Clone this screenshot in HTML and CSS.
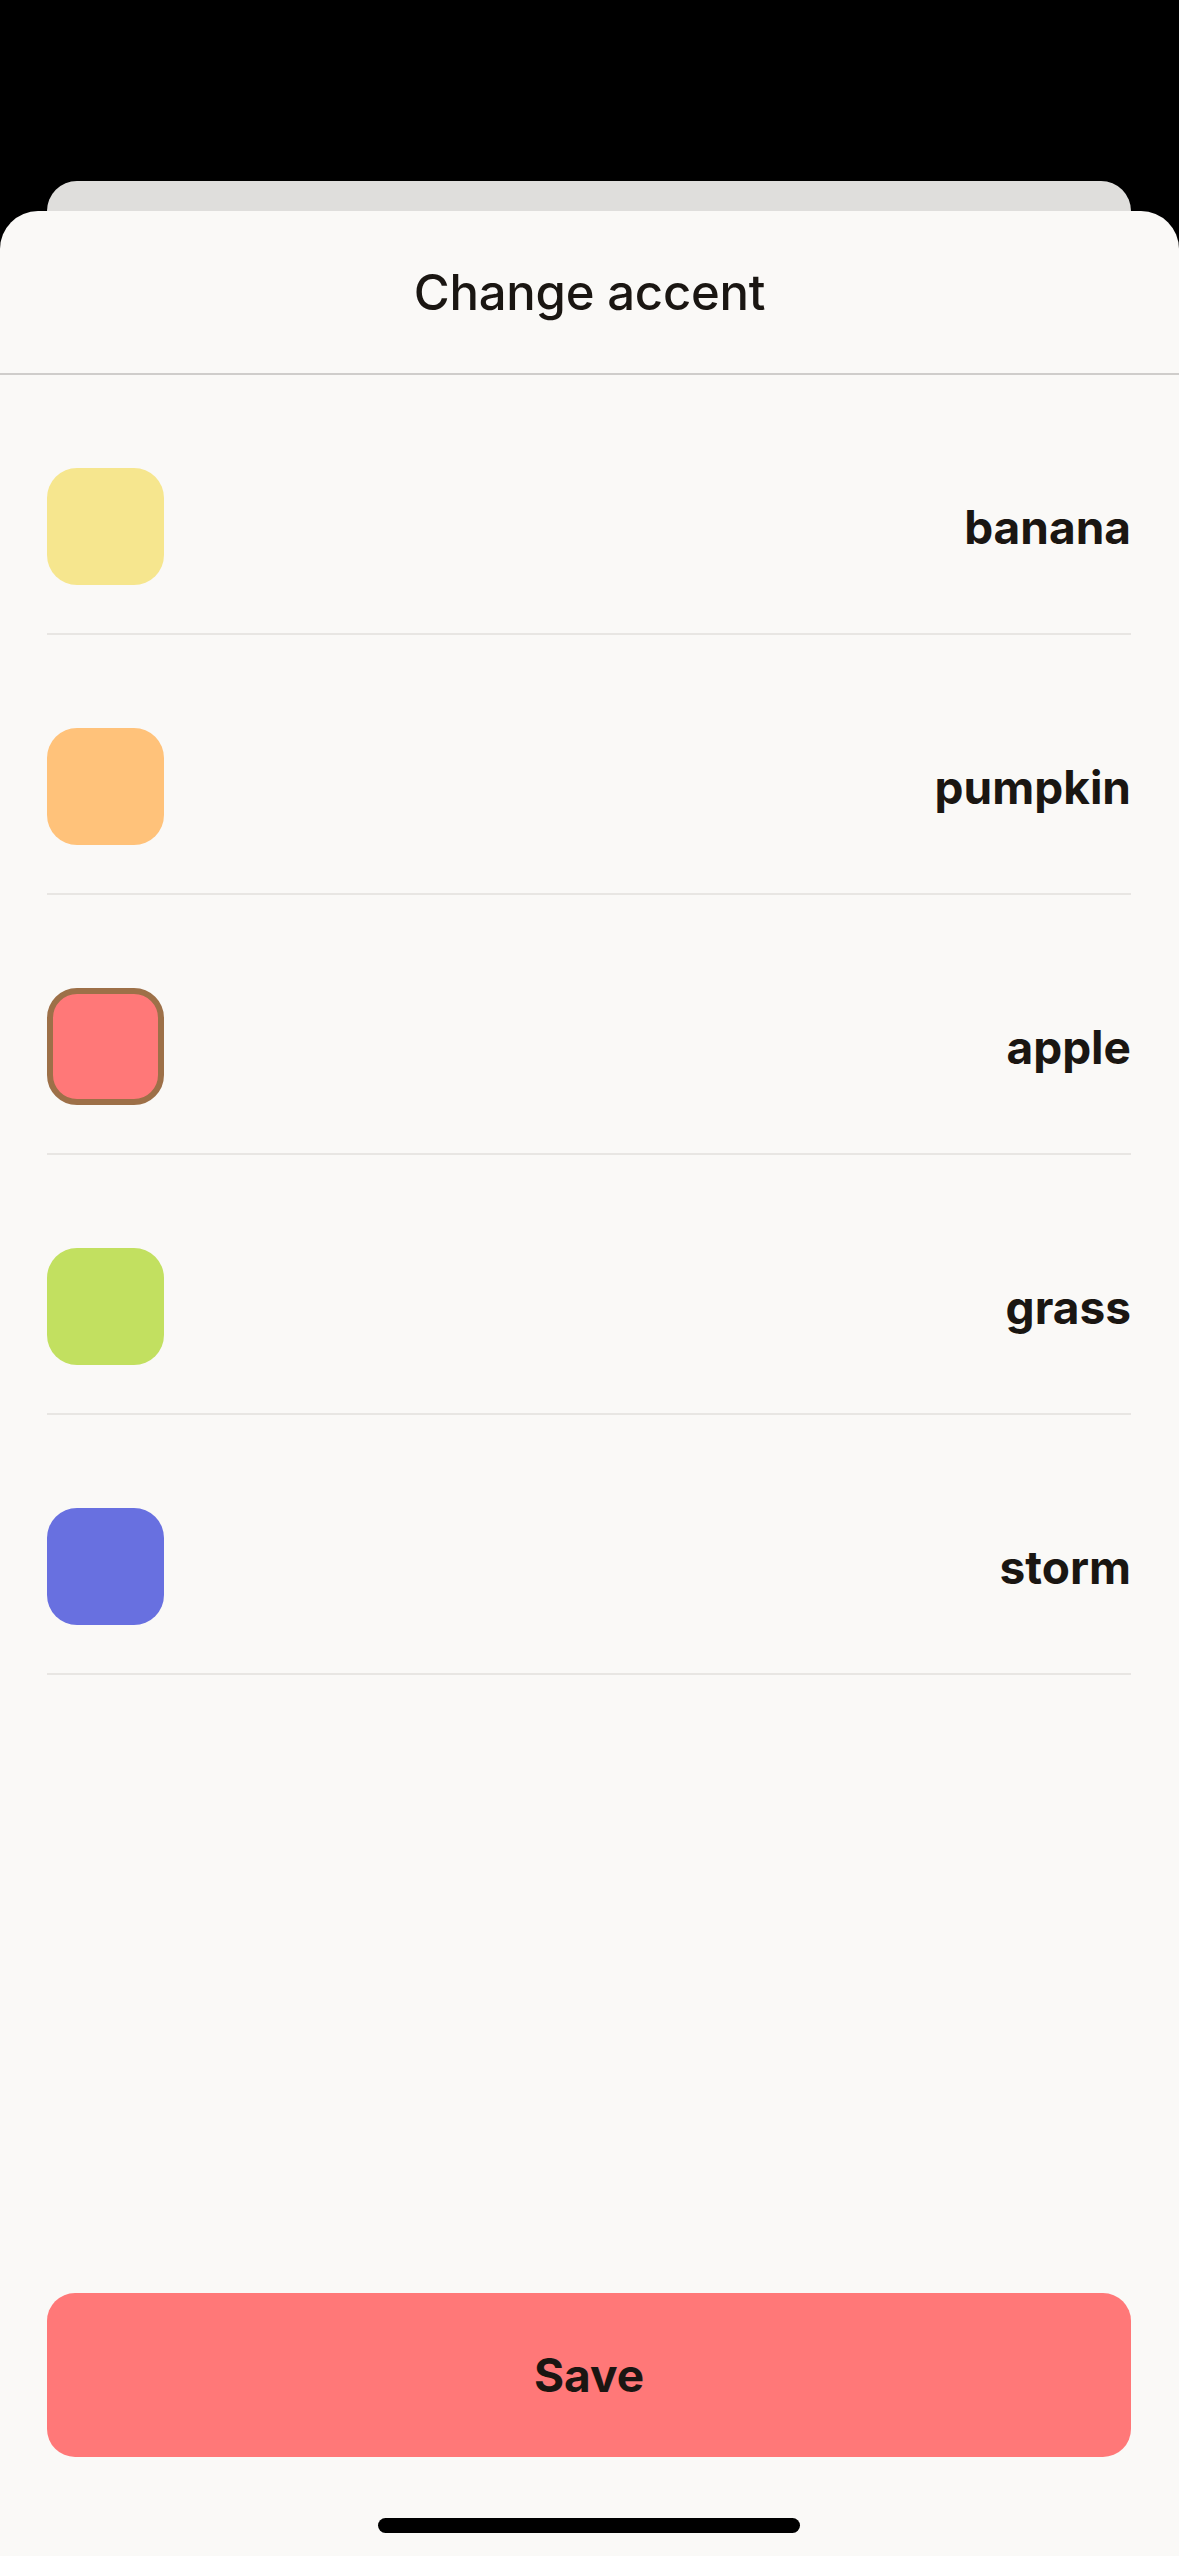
FILE: index.html
```html
<!DOCTYPE html>
<html lang="en">
<head>
<meta charset="utf-8">
<title>Change accent</title>
<link rel="stylesheet" href="styles.css">
</head>
<body>
<div class="page">
  <div class="top"></div>
  <div class="backcard"></div>
  <div class="sheet">
    <header class="header"><h1 class="title">Change accent</h1></header>
    <ul class="list">
      <li class="row"><span class="swatch banana"></span><span class="label">banana</span></li>
      <li class="row"><span class="swatch pumpkin"></span><span class="label">pumpkin</span></li>
      <li class="row"><span class="swatch apple selected"></span><span class="label">apple</span></li>
      <li class="row"><span class="swatch grass"></span><span class="label">grass</span></li>
      <li class="row"><span class="swatch storm"></span><span class="label">storm</span></li>
    </ul>
    <div class="footer">
      <button class="save" type="button">Save</button>
      <div class="home-indicator"></div>
    </div>
  </div>
</div>
</body>
</html>
```

FILE: styles.css
```css
* { box-sizing: border-box; }
html, body { margin: 0; padding: 0; }
body {
  background: #000;
  font-family: Inter, "Noto Sans", "Liberation Sans", sans-serif;
  color: #1a1612;
}
.page {
  min-height: 100vh;
  display: flex;
  flex-direction: column;
}
.top { height: 181px; flex: none; }
.backcard {
  flex: none;
  height: 30px;
  margin: 0 48px 0 47px;
  background: #dfdedc;
  border-radius: 30px 30px 0 0;
}
.sheet {
  flex: 1;
  display: flex;
  flex-direction: column;
  background: #faf9f7;
  border-radius: 38px 38px 0 0;
}
.header {
  height: 164px;
  display: flex;
  align-items: center;
  justify-content: center;
  border-bottom: 2px solid #cfcdcb;
}
.title {
  margin: 0;
  font-size: 49px;
  font-weight: 500;
  letter-spacing: -0.2px;
}
.list {
  list-style: none;
  margin: 0;
  padding: 0 48px 0 47px;
  flex: 1;
}
.row {
  display: flex;
  align-items: center;
  justify-content: space-between;
  padding: 93px 0 48px;
  border-bottom: 2px solid #e8e6e3;
}
.swatch {
  width: 117px;
  height: 117px;
  border-radius: 30px;
  flex: none;
}
.banana { background: #f6e68e; }
.pumpkin { background: #ffc27a; }
.apple { background: #ff7878; }
.grass { background: #c2e060; }
.storm { background: #6870e0; }
.selected { border: 6px solid #9d7048; }
.label {
  font-size: 46px;
  font-weight: 700;
  letter-spacing: 0;
}
.footer {
  display: flex;
  flex-direction: column;
  align-items: center;
  padding: 0 48px 23px 47px;
}
.save {
  width: 100%;
  height: 164px;
  border: none;
  border-radius: 28px;
  background: #ff7878;
  color: #1a1612;
  font-family: inherit;
  font-size: 46px;
  font-weight: 700;
}
.home-indicator {
  margin-top: 61px;
  width: 422px;
  height: 15px;
  border-radius: 8px;
  background: #000;
}
```
